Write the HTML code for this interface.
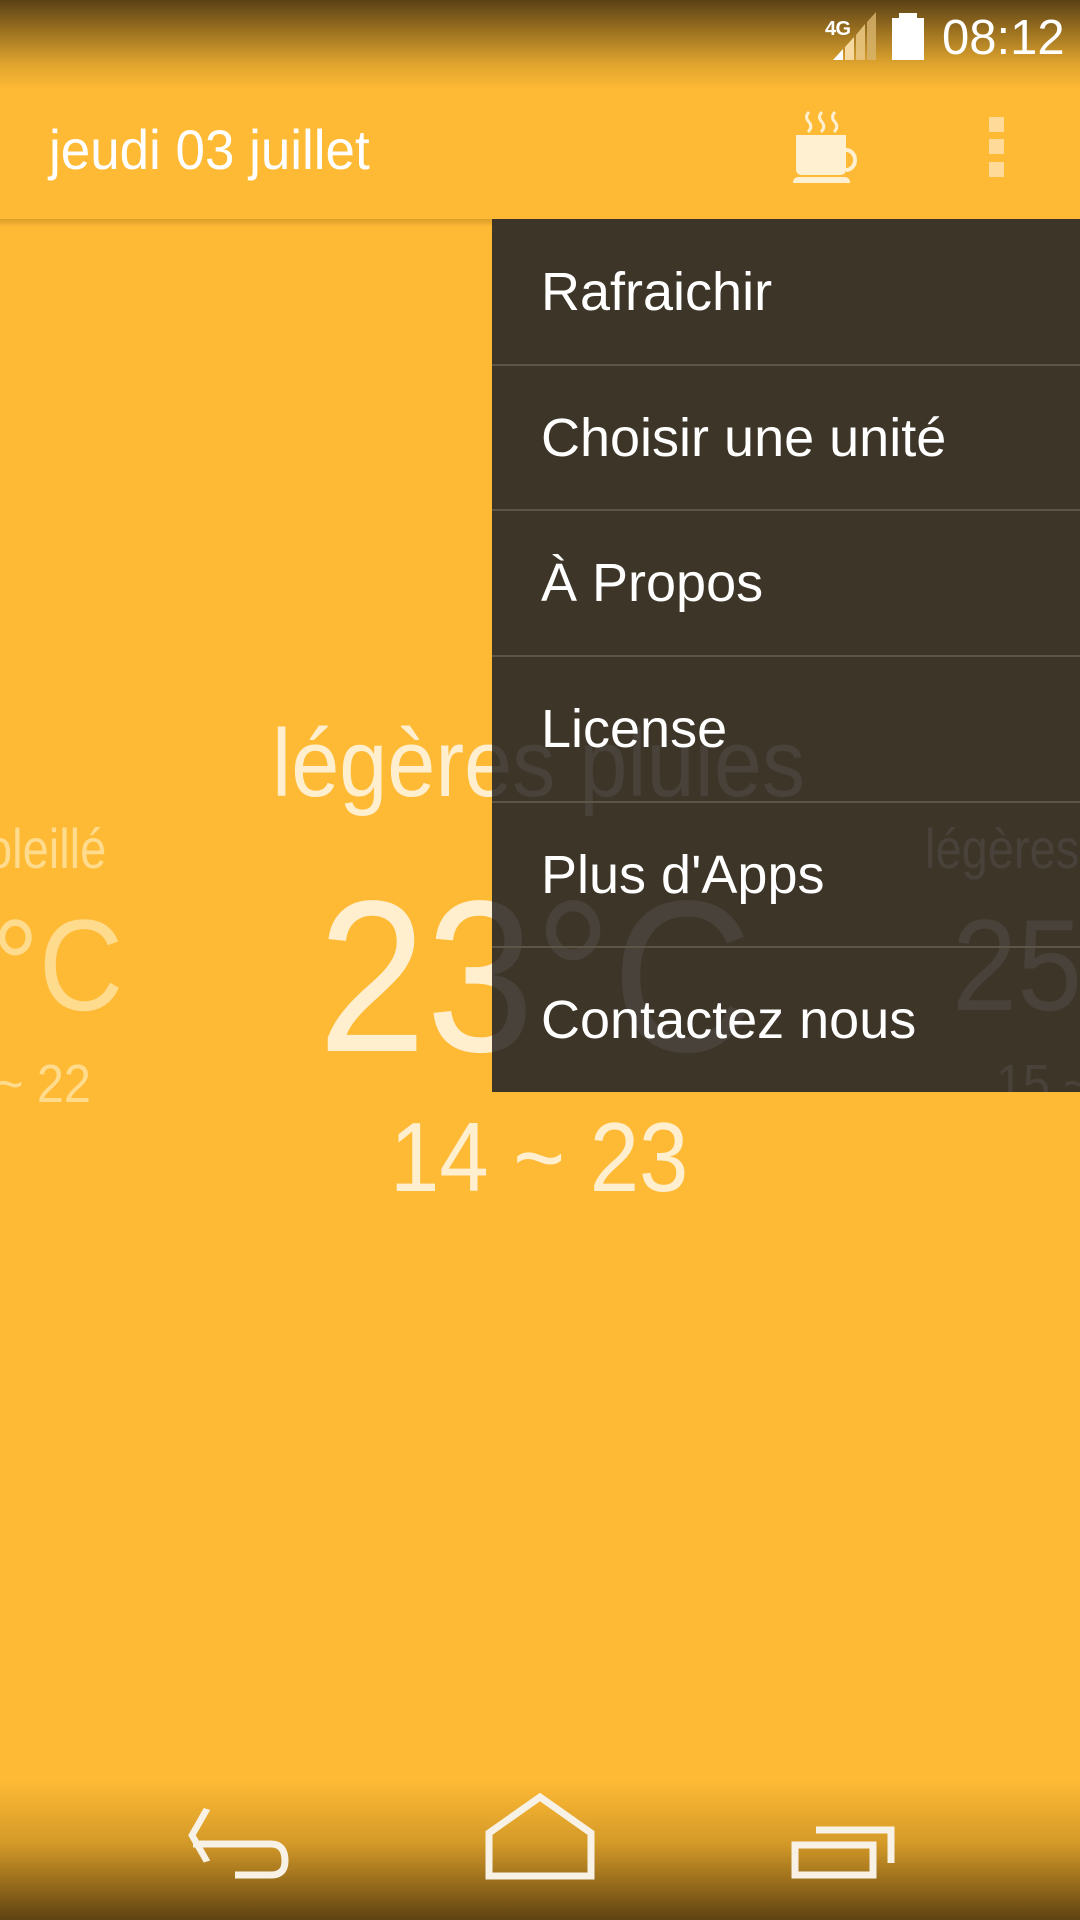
<!DOCTYPE html>
<html><head><meta charset="utf-8"><style>
*{margin:0;padding:0;box-sizing:border-box}
body{width:1080px;height:1920px;overflow:hidden;background:#FFBA35;position:relative;font-family:"Liberation Sans",sans-serif}
.abs{position:absolute;white-space:nowrap;line-height:1}
.pale{color:#FFEFCF}
.faint{color:#FFDB8E}
#status{position:absolute;left:0;top:0;width:1080px;height:90px;background:linear-gradient(#5a4116 0px,#9a7020 30px,#e0a52e 65px,#FFBA35 90px)}
#nav{position:absolute;left:0;top:1780px;width:1080px;height:140px;background:linear-gradient(#FFBA35,#d49a28 45%,#8a6219 80%,#5e4313)}
#abshadow{position:absolute;left:0;top:219px;width:492px;height:8px;background:linear-gradient(rgba(150,100,20,.35),rgba(150,100,20,0))}
#menu{position:absolute;left:492px;top:219px;width:588px;height:873px;background:#3D3527;overflow:hidden}
.item{position:absolute;left:0;width:588px;height:146px;color:#fff;font-size:54px;padding-left:49px;line-height:146px}
.div{position:absolute;left:0;width:588px;height:2px;background:#5d5546}
.dk{color:#48423a}
</style></head><body>
<div id="status"></div>
<svg class="abs" style="left:820px;top:10px" width="110" height="55" viewBox="820 10 110 55">
<text x="825" y="35" font-family="Liberation Sans" font-weight="bold" font-size="20" fill="#fff" textLength="26">4G</text>
<polygon points="833,60 843,49 843,60" fill="#fff"/>
<polygon points="845,47 854,37 854,60 845,60" fill="#f5d9a0"/>
<polygon points="856,35 865,24 865,60 856,60" fill="#e8c580" opacity=".9"/>
<polygon points="867,22 876,12 876,60 867,60" fill="#d9b56e" opacity=".8"/>
<rect x="899" y="13" width="18" height="6" fill="#fff"/>
<rect x="892" y="18" width="32" height="42" fill="#fff"/>
</svg>
<div class="abs" style="left:942px;top:14px;font-size:49px;color:#fff">08:12</div>

<div class="abs" style="left:49px;top:122px;font-size:56px;color:#fff;transform:scaleX(.945);transform-origin:left top">jeudi 03 juillet</div>
<svg class="abs" style="left:790px;top:108px" width="80" height="80" viewBox="790 108 80 80">
<g fill="none" stroke="#FFF0D2" stroke-width="3">
<path d="M809,112 q-5,5 0,10 q4,5 -1,10"/><path d="M822,112 q-5,5 0,10 q4,5 -1,10"/><path d="M835,112 q-5,5 0,10 q4,5 -1,10"/>
<path d="M846,150 a9,10 0 0 1 0,20" stroke-width="4"/>
</g>
<path d="M796,135 h50 v34 q0,6 -6,6 h-38 q-6,0 -6,-6z" fill="#FFF0D2"/>
<path d="M793,183 q0,-6 6,-6 h45 q6,0 6,6z" fill="#FFF0D2"/>
</svg>
<div class="abs" style="left:989px;top:117px;width:15px;height:15px;background:#FFDA98"></div>
<div class="abs" style="left:989px;top:139px;width:15px;height:15px;background:#FFDA98"></div>
<div class="abs" style="left:989px;top:162px;width:15px;height:15px;background:#FFDA98"></div>
<div id="abshadow"></div>

<div id="content">
<div class="abs pale" style="left:272px;top:716px;font-size:96px;transform:scaleX(.9);transform-origin:left top">légères pluies</div>
<div class="abs pale" style="left:318px;top:868px;font-size:216px;transform:scaleX(.9);transform-origin:left top">23°C</div>
<div class="abs pale" style="left:390px;top:1108px;font-size:98px;transform:scaleX(.905);transform-origin:left top">14 ~ 23</div>
<div class="abs faint" style="left:-14px;top:821px;font-size:56px;transform:scaleX(.84);transform-origin:left top">oleillé</div>
<div class="abs faint" style="left:-8px;top:900px;font-size:130px;transform:scaleX(.9);transform-origin:left top">°C</div>
<div class="abs faint" style="left:-5px;top:1057px;font-size:54px;transform:scaleX(.9);transform-origin:left top">~ 22</div>
</div>

<div id="menu">
<div style="position:absolute;left:-492px;top:-219px;width:1080px;height:1920px" class="dk">
<div class="abs" style="left:272px;top:716px;font-size:96px;transform:scaleX(.9);transform-origin:left top">légères pluies</div>
<div class="abs" style="left:318px;top:868px;font-size:216px;transform:scaleX(.9);transform-origin:left top">23°C</div>
<div class="abs" style="left:925px;top:821px;font-size:56px;transform:scaleX(.84);transform-origin:left top">légères</div>
<div class="abs" style="left:952px;top:900px;font-size:130px;transform:scaleX(.9);transform-origin:left top">25</div>
<div class="abs" style="left:996px;top:1057px;font-size:54px;transform:scaleX(.9);transform-origin:left top">15 ~</div>
</div>
<div class="item" style="top:0">Rafraichir</div>
<div class="div" style="top:145px"></div>
<div class="item" style="top:146px">Choisir une unité</div>
<div class="div" style="top:290px"></div>
<div class="item" style="top:291px">À Propos</div>
<div class="div" style="top:436px"></div>
<div class="item" style="top:437px">License</div>
<div class="div" style="top:582px"></div>
<div class="item" style="top:583px">Plus d'Apps</div>
<div class="div" style="top:727px"></div>
<div class="item" style="top:728px">Contactez nous</div>
</div>

<div id="nav"></div>
<svg class="abs" style="left:0;top:1780px" width="1080" height="140" viewBox="0 1780 1080 140">
<g fill="none" stroke="#F8F2E6" stroke-width="7">
<path d="M207,1827 l-15,35 l15,35" transform="translate(0,-18) scale(1,0.75) translate(0,609)"/>
<path d="M193,1844 h78 q14,0 14,17 q0,14 -14,14 h-36"/>
<path d="M489,1876 v-43 l51,-36 l51,36 v43z"/>
<rect x="795" y="1845" width="78" height="30"/>
<path d="M816,1830 h75 v33"/>
</g>
</svg>
</body></html>
